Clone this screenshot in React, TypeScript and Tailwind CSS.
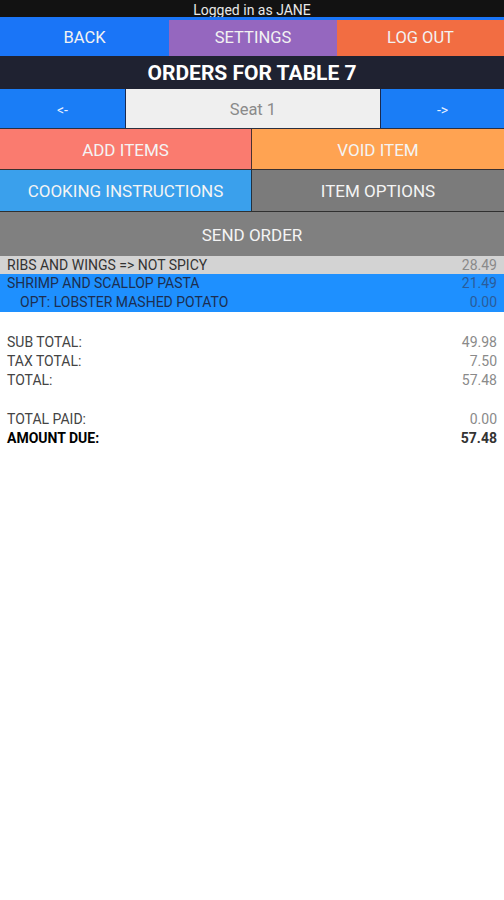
import React from "react";

const font = { fontFamily: "Roboto, 'Noto Sans', Arial, sans-serif" };

export default function App() {
  return (
    <div className="w-[504px] h-[900px] bg-white flex flex-col" style={font}>
      <div className="h-[17px] bg-[#121212] flex items-center justify-center pt-[2px] text-[14px] text-[#e8e8e8] leading-none">
        Logged in as JANE
      </div>
      <div className="h-[39px] flex text-[16.5px] text-[#f2f2f2] pt-[3px] bg-[#1a75f7]">
        <div className="w-[169px] bg-[#1a75f7] flex items-center justify-center">BACK</div>
        <div className="w-[168px] bg-[#9567bf] flex items-center justify-center">SETTINGS</div>
        <div className="flex-1 bg-[#f26d42] flex items-center justify-center">LOG OUT</div>
      </div>
      <div className="h-[33px] bg-[#1f2231] flex items-center justify-center pt-[3px] text-[21px] font-bold text-white">
        ORDERS FOR TABLE 7
      </div>
      <div className="h-[40px] flex border-b border-[#2a3040]">
        <div className="w-[126px] bg-[#1a7df6] border-r border-[#1a2a50] flex items-center justify-center pt-[3px] text-[14px] text-[#e8f0ff]">&lt;-</div>
        <div className="w-[254px] bg-[#efefef] flex items-center justify-center pt-[3px] text-[16.5px] text-[#8a8a8a]">Seat 1</div>
        <div className="flex-1 bg-[#1a7df6] border-l border-[#1a2a50] flex items-center justify-center pt-[3px] text-[14px] text-[#e8f0ff]">-&gt;</div>
      </div>
      <div className="h-[41px] flex border-b border-[#3a3030] text-[17px] text-[#f4f4f4]">
        <div className="w-[252px] bg-[#fa7b6f] border-r border-[#4a3030] flex items-center justify-center pt-[3px]">ADD ITEMS</div>
        <div className="flex-1 bg-[#ffa352] flex items-center justify-center pt-[3px]">VOID ITEM</div>
      </div>
      <div className="h-[42px] flex border-b border-[#303030] text-[17px] text-[#f4f4f4]">
        <div className="w-[252px] bg-[#3aa0ec] border-r border-[#203040] flex items-center justify-center pt-[3px]">COOKING INSTRUCTIONS</div>
        <div className="flex-1 bg-[#7b7b7b] flex items-center justify-center pt-[3px]">ITEM OPTIONS</div>
      </div>
      <div className="h-[44px] bg-[#808080] flex items-center justify-center pt-[3px] text-[17px] text-[#f4f4f4]">
        SEND ORDER
      </div>
      <div className="h-[18px] bg-[#d3d3d3] flex items-center justify-between px-[7px] text-[14px]">
        <span className="text-[#333]">RIBS AND WINGS =&gt; NOT SPICY</span>
        <span className="text-[#8a8a8a]">28.49</span>
      </div>
      <div className="bg-[#1e90ff]">
        <div className="h-[19px] flex items-center justify-between px-[7px] text-[14px]">
          <span className="text-[#1c2e50]">SHRIMP AND SCALLOP PASTA</span>
          <span className="text-[#2a5c9a]">21.49</span>
        </div>
        <div className="h-[19px] flex items-center justify-between pl-[20px] pr-[7px] text-[14px]">
          <span className="text-[#1c2e50]">OPT: LOBSTER MASHED POTATO</span>
          <span className="text-[#2a5c9a]">0.00</span>
        </div>
      </div>
      <div className="pt-[21px] px-[7px] text-[14px]">
        <div className="h-[19px] flex items-center justify-between">
          <span className="text-[#444]">SUB TOTAL:</span>
          <span className="text-[#8a8a8a]">49.98</span>
        </div>
        <div className="h-[19px] flex items-center justify-between">
          <span className="text-[#444]">TAX TOTAL:</span>
          <span className="text-[#8a8a8a]">7.50</span>
        </div>
        <div className="h-[19px] flex items-center justify-between">
          <span className="text-[#444]">TOTAL:</span>
          <span className="text-[#8a8a8a]">57.48</span>
        </div>
        <div className="h-[20px]" />
        <div className="h-[19px] flex items-center justify-between">
          <span className="text-[#444]">TOTAL PAID:</span>
          <span className="text-[#8a8a8a]">0.00</span>
        </div>
        <div className="h-[19px] flex items-center justify-between">
          <span className="text-black font-bold">AMOUNT DUE:</span>
          <span className="text-[#333] font-bold">57.48</span>
        </div>
      </div>
    </div>
  );
}
